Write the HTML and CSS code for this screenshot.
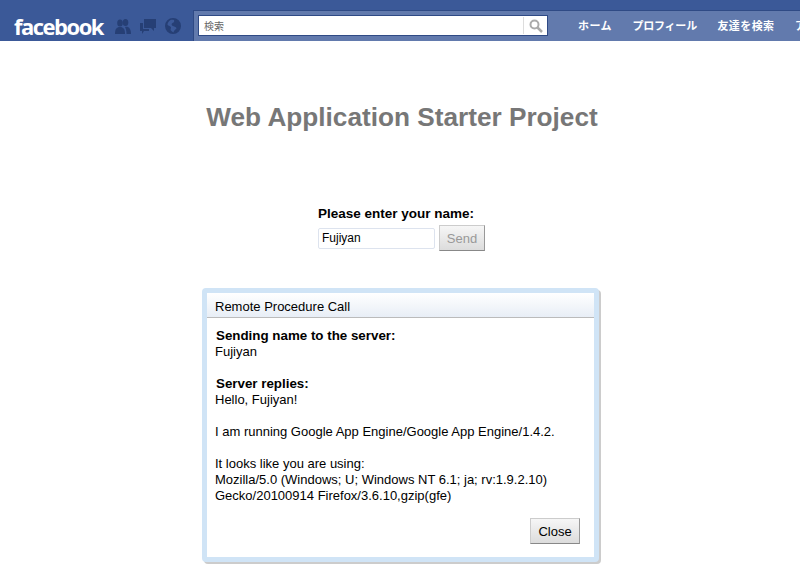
FILE: index.html
```html
<!DOCTYPE html>
<html lang="ja">
<head>
<meta charset="utf-8">
<title>Web Application Starter Project</title>
<link rel="stylesheet" href="styles.css">
</head>
<body>
<header class="topbar">
  <div class="brand">
    <span class="logo">facebook</span>
    <div class="jewels">
      <svg class="jewel" width="16" height="16" viewBox="0 0 16 16"><ellipse cx="5" cy="5" rx="2.800" ry="3.500"/><path d="M0 16c0-5 1.500-7 5-7s5 2 5 7z"/><ellipse cx="10.500" cy="4.500" rx="2.800" ry="3.500"/><path d="M10 9c4-.8 6 2 6 7h-4.500c0-3-.500-5-1.500-7z"/></svg>
      <svg class="jewel" width="16" height="16" viewBox="0 0 16 16"><path d="M4 1h12v9h-2v3l-3-3H4z"/><path d="M0 5h3v6h6v2H4l-2 3v-3H0z"/></svg>
      <svg class="jewel" width="16" height="16" viewBox="0 0 16 16"><path fill-rule="evenodd" d="M8 0a8 8 0 1 1 0 16a8 8 0 0 1 0-16zM5.500 2C3.500 3 2.500 5 2.500 7c1 .5 3 1 3.500 2.500L5.500 12c1 1 2 2 3 2.500c0-2 2-3 3-4c0-1.500-2-2-3.500-2.500C6.500 7.500 6 6 7.500 5C9 4.500 9.500 3.500 9 2c-1-.5-2.500-.5-3.500 0z"/></svg>
    </div>
  </div>
  <div class="navzone">
    <div class="search">
      <span class="search-text">検索</span>
      <span class="search-btn">
        <svg width="14" height="14" viewBox="0 0 14 14"><circle cx="5.500" cy="5.500" r="4" fill="none" stroke="#aaa" stroke-width="2"/><path d="M8.500 8.500L13 13" stroke="#aaa" stroke-width="2.500"/></svg>
      </span>
    </div>
    <nav class="nav">
      <a>ホーム</a>
      <a class="tight">プロフィール</a>
      <a>友達を検索</a>
      <a>アカウント</a>
    </nav>
  </div>
</header>
<main class="page">
  <h1 class="title">Web Application Starter Project</h1>
  <div class="form">
    <div class="form-label">Please enter your name:</div>
    <div class="form-row">
      <div class="name-box">Fujiyan</div>
      <button class="btn btn-disabled">Send</button>
    </div>
  </div>
  <section class="dialog">
    <div class="dialog-head">Remote Procedure Call</div>
    <div class="dialog-body">
      <div class="bold">Sending name to the server:</div>
      <div>Fujiyan</div>
      <div class="bold gap">Server replies:</div>
      <div>Hello, Fujiyan!</div>
      <div class="gap">I am running Google App Engine/Google App Engine/1.4.2.</div>
      <div class="gap">It looks like you are using:</div>
      <div>Mozilla/5.0 (Windows; U; Windows NT 6.1; ja; rv:1.9.2.10)</div>
      <div>Gecko/20100914 Firefox/3.6.10,gzip(gfe)</div>
      <div class="dialog-foot"><button class="btn btn-close">Close</button></div>
    </div>
  </section>
</main>
</body>
</html>
```
FILE: styles.css
```css
html, body { margin: 0; padding: 0; height: 580px; overflow: hidden; background: #fff; }
body { font-family: "Liberation Sans", Arial, sans-serif; font-size: 12px; color: #000; }

.topbar { display: flex; height: 41px; background: #3b5998; }
.brand { display: flex; align-items: center; width: 193px; flex: none; box-sizing: border-box; padding: 10px 0 0 14px; }
.logo { font-family: "Open Sans", "Liberation Sans", sans-serif; font-weight: 700; font-size: 22px; letter-spacing: -1.500px; color: #fff; width: 101px; line-height: 30px; flex: none; }
.jewels { display: flex; align-items: center; gap: 9px; }
.jewel { fill: #263f75; display: block; flex: none; }

.navzone { flex: 1; min-width: 0; margin-top: 10px; height: 31px; background: #627aad; border-top: 1px solid #2f4a85; border-left: 1px solid #2f4a85; box-sizing: border-box; display: flex; align-items: flex-start; overflow: hidden; }
.search { width: 350px; height: 21px; margin: 4px 0 0 4px; box-sizing: border-box; background: #fff; border: 1px solid #2f4a85; display: flex; flex: none; align-items: center; justify-content: space-between; }
.search-text { font-family: "Noto Sans CJK JP", sans-serif; font-size: 10px; color: #666; padding-left: 5px; }
.search-btn { width: 23px; height: 17px; border-left: 1px solid #ddd; display: flex; align-items: center; justify-content: center; }
.nav { display: flex; gap: 20.500px; margin-left: 30px; height: 27px; align-items: center; flex: none; }
.nav a { font-family: "Noto Sans CJK JP", sans-serif; font-size: 11px; font-weight: 700; color: #fff; white-space: nowrap; letter-spacing: 0.400px; }
.nav a.tight { letter-spacing: -0.200px; }

.page { display: flex; flex-direction: column; align-items: center; }
.title { margin: 58px 0 0 4px; font-size: 26.200px; line-height: 36px; font-weight: 700; color: #777; }
.form { margin: 71px 0 0 3px; width: 167px; }
.form-label { font-size: 13.500px; font-weight: 700; line-height: 16px; }
.form-row { display: flex; align-items: center; gap: 4px; margin-top: 3px; }
.name-box { width: 117px; height: 21px; box-sizing: border-box; border: 1px solid #dde3ee; border-radius: 2px; font-size: 12px; line-height: 19px; padding-left: 3px; }
.btn { font-family: "Liberation Sans", Arial, sans-serif; font-size: 13px; padding: 0; background: linear-gradient(#f6f6f6, #dcdcdc); border: 1px solid #ccc; border-right-color: #999; border-bottom-color: #888; color: #000; }
.btn-disabled { width: 46px; height: 26px; color: #999; }

.dialog { margin: 37px 0 0 1px; width: 397px; height: 274px; box-sizing: border-box; border: 5px solid #d0e4f6; border-radius: 4px; box-shadow: 2px 2px 0 #ccc; background: #fff; }
.dialog-head { height: 25px; box-sizing: border-box; line-height: 27px; padding-left: 8px; font-size: 13px; background: linear-gradient(#fff, #e8eef6); border-bottom: 1px solid #bbb; }
.dialog-body { padding: 10px 8px 0; line-height: 16px; font-size: 13px; }
.bold { font-weight: 700; font-size: 13.350px; padding-left: 1px; }
.gap { margin-top: 16px; }
.dialog-foot { display: flex; justify-content: flex-end; margin-top: 14px; padding-right: 6px; }
.btn-close { width: 50px; height: 26px; }
```
